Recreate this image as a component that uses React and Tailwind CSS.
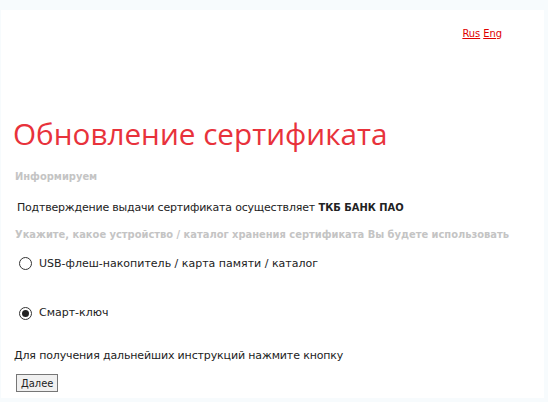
import React, { useState } from 'react';

const condensed = { fontFamily: '"DejaVu Sans Condensed", Tahoma, sans-serif' };

const Radio = ({ checked, onClick, children }) => (
  <label className="flex items-center gap-[7px] cursor-pointer" onClick={onClick}>
    <span className="w-[13px] h-[13px] rounded-full border border-[#333] bg-white flex items-center justify-center">
      {checked && <span className="w-[7px] h-[7px] rounded-full bg-[#222]" />}
    </span>
    <span>{children}</span>
  </label>
);

const App = () => {
  const [device, setDevice] = useState('smart');

  return (
    <div
      className="w-[548px] h-[402px] bg-[#f7fbfd] pt-[10px] pl-[1px] pr-[4px] pb-[4px] text-[11px] text-[#222]"
      style={{ fontFamily: '"DejaVu Sans", Tahoma, sans-serif' }}
    >
      <div className="bg-white h-full flex flex-col">
        {/* Language switch */}
        <div className="flex justify-end gap-[3px] pr-[42px] pt-[16px]" style={condensed}>
          <a href="#" className="text-[#e00000] underline">Rus</a>
          <a href="#" className="text-[#e00000] underline">Eng</a>
        </div>

        <h1
          className="text-[29.7px] leading-none text-[#e8323b] mt-[76px] ml-[12px]"
          style={{ fontFamily: '"Open Sans", "Noto Sans", sans-serif' }}
        >
          Обновление сертификата
        </h1>

        <p className="font-bold text-[#c4c4c4] mt-[21px] ml-[14px]" style={condensed}>
          Информируем
        </p>

        <p className="mt-[14px] ml-[16px]">
          <span className="tracking-[-0.2px]">Подтверждение выдачи сертификата осуществляет</span>{' '}
          <b style={condensed}>ТКБ БАНК ПАО</b>
        </p>

        <p className="font-bold text-[#c4c4c4] mt-[11px] ml-[14px]" style={condensed}>
          Укажите, какое устройство / каталог хранения сертификата Вы будете использовать
        </p>

        <div className="ml-[18px] mt-[12px] flex flex-col gap-[33px]">
          <Radio checked={device === 'usb'} onClick={() => setDevice('usb')}>
            USB-флеш-накопитель / карта памяти / каталог
          </Radio>
          <Radio checked={device === 'smart'} onClick={() => setDevice('smart')}>
            Смарт-ключ
          </Radio>
        </div>

        <p className="mt-[26px] ml-[13px] tracking-[-0.14px]">
          Для получения дальнейших инструкций нажмите кнопку
        </p>

        <div className="mt-[10px] ml-[15px]">
          <button
            className="bg-[#f0f0f0] border border-[#767676] px-[4px] h-[18px] leading-none text-[11px] text-[#222]"
            style={condensed}
          >
            Далее
          </button>
        </div>
      </div>
    </div>
  );
};

export default App;
